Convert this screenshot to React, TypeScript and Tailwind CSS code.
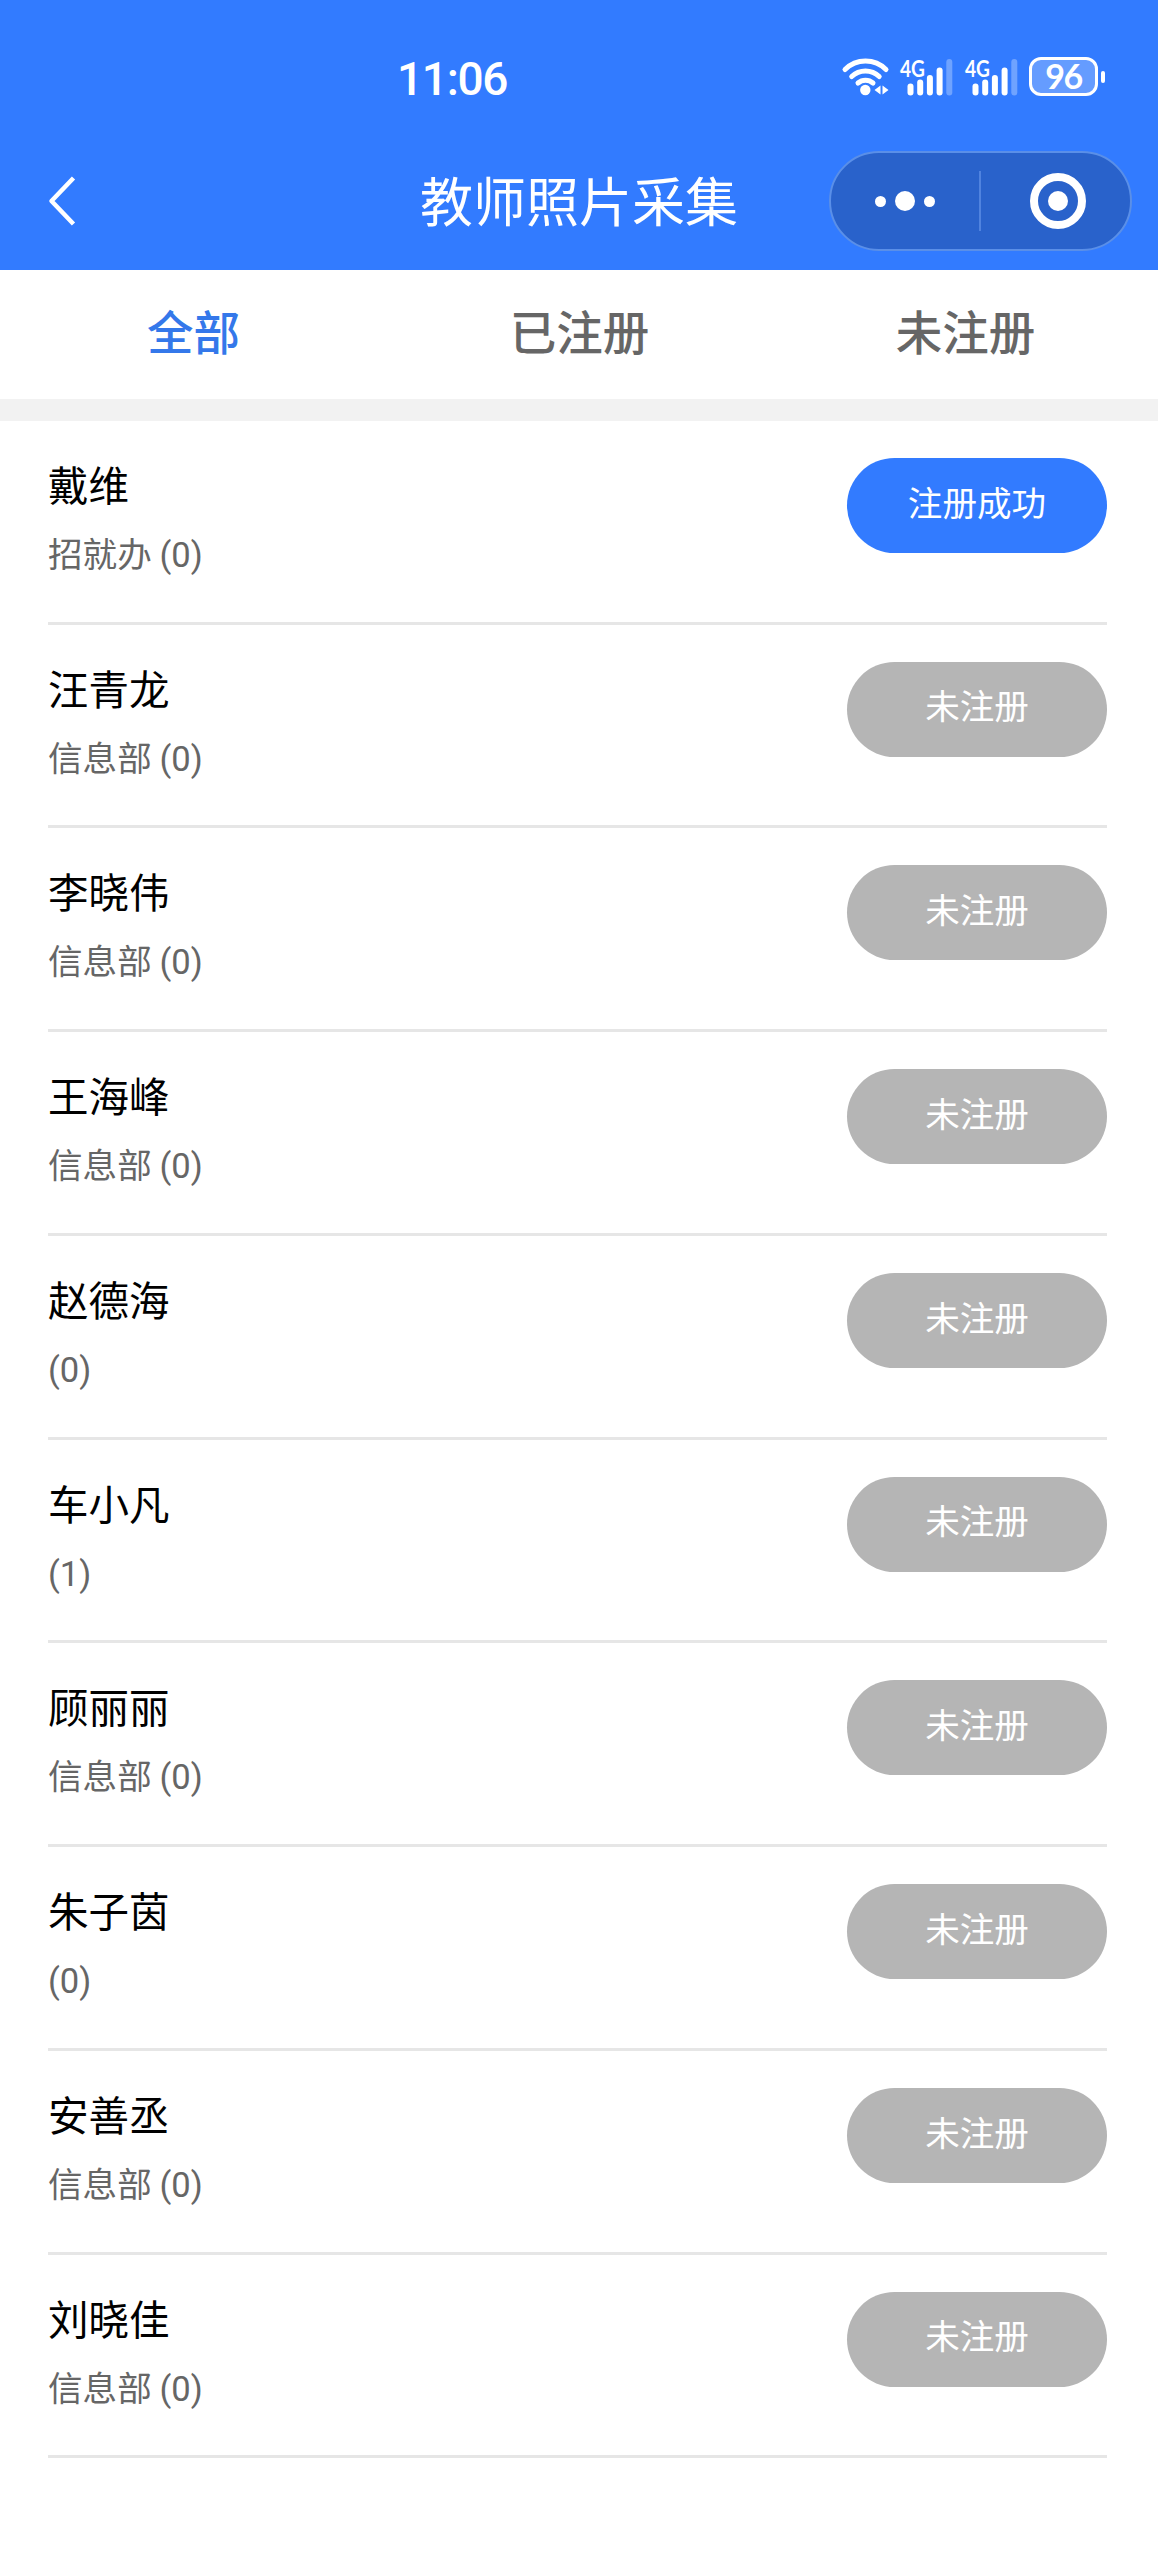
import React, { useState } from 'react';

const TEACHERS = [
  { name: '戴维', dept: '招就办', count: 0, registered: true },
  { name: '汪青龙', dept: '信息部', count: 0, registered: false },
  { name: '李晓伟', dept: '信息部', count: 0, registered: false },
  { name: '王海峰', dept: '信息部', count: 0, registered: false },
  { name: '赵德海', dept: '', count: 0, registered: false },
  { name: '车小凡', dept: '', count: 1, registered: false },
  { name: '顾丽丽', dept: '信息部', count: 0, registered: false },
  { name: '朱子茵', dept: '', count: 0, registered: false },
  { name: '安善丞', dept: '信息部', count: 0, registered: false },
  { name: '刘晓佳', dept: '信息部', count: 0, registered: false },
];

const TABS = ['全部', '已注册', '未注册'];

export default function App() {
  const [activeTab, setActiveTab] = useState('全部');

  const teachers = TEACHERS.filter(t => activeTab === '全部' || t.registered === (activeTab === '已注册'));

  return (
    <div className="min-h-[2560px] w-full bg-white font-['Noto_Sans_CJK_SC',sans-serif]">
      <header className="h-[270px] bg-[#327bff] text-white">
        <StatusBar />
        <NavBar />
      </header>

      <div className="flex h-[129px]">
        {TABS.map(tab => (
          <button
            key={tab}
            onClick={() => setActiveTab(tab)}
            className={`flex-1 pb-[8px] pl-[1px] text-[46.5px] leading-none font-medium ${activeTab === tab ? 'text-[#3478ea]' : 'text-[#666666]'}`}
          >
            {tab}
          </button>
        ))}
      </div>
      <div className="h-[22px] bg-[#f2f2f2]" />

      <main className="pr-[51px] pl-[48px]">
        {teachers.map(t => <TeacherRow key={t.name} teacher={t} />)}
      </main>
    </div>
  );
}

function StatusBar() {
  return (
    <div className="flex h-[151px] items-start justify-between pr-[53px] pl-[397px]">
      <span className="pt-[52px] font-['Roboto',sans-serif] text-[46px] leading-[54px] font-medium tracking-[-1.3px]">11:06</span>
      <div className="flex items-center pt-[49px]">
        <WifiIcon />
        <SignalIcon />
        <SignalIcon />
        <div className="ml-[3px] flex items-center gap-[3px]">
          <div className="flex h-[39px] w-[69px] items-center justify-center rounded-[12px] border-[3px] border-white bg-white/25 pb-[2px] font-['Lato',sans-serif] text-[34px] leading-none font-bold tracking-[-1.5px]">
            96
          </div>
          <div className="h-[12px] w-[4px] rounded-full bg-white" />
        </div>
      </div>
    </div>
  );
}

function WifiIcon() {
  return (
    <svg width="56" height="39" viewBox="0 0 56 39" fill="none" stroke="#fff" strokeWidth="5" strokeLinecap="round">
      <path d="M4 12.500a29 29 0 0 1 41 0" />
      <path d="M10.700 19.500a20 20 0 0 1 27.500 0" />
      <path d="M17 26a11.500 11.500 0 0 1 15 0" />
      <circle cx="24.300" cy="33" r="5.200" fill="#fff" stroke="none" />
      <path d="M39.500 28.500v9l-6-4.500zM41.500 28.500v9l6-4.500z" fill="#fff" stroke="none" />
    </svg>
  );
}

function SignalIcon() {
  return (
    <svg width="64.500" height="55" viewBox="-2 -8 64.500 55" fill="#fff">
      <text x="1" y="19.500" fontFamily="Lato, sans-serif" fontSize="23" fontWeight="700" textLength="25" lengthAdjust="spacingAndGlyphs">4G</text>
      <rect x="8.500" y="26.500" width="6" height="12" rx="3" />
      <rect x="18.200" y="22.500" width="6" height="16" rx="3" />
      <rect x="27.900" y="18" width="6" height="20.500" rx="3" />
      <rect x="37.600" y="10.500" width="6" height="28" rx="3" />
      <rect x="47.300" y="2" width="6" height="36.500" rx="3" opacity="0.300" />
    </svg>
  );
}

function NavBar() {
  return (
    <div className="grid h-[100px] grid-cols-[1fr_auto_1fr] items-center px-[26px]">
      <button aria-label="返回" className="ml-[22px] w-[28px]">
        <svg width="28" height="50" viewBox="0 0 28 50" fill="none" stroke="#fff" strokeWidth="4.500">
          <path d="M25.500 2L3.500 25l22 23" strokeLinejoin="round" />
        </svg>
      </button>
      <h1 className="pb-[3px] text-[53px] leading-none">教师照片采集</h1>
      <div className="flex h-[100px] w-[303px] items-center justify-self-end rounded-full border-2 border-[#5a8fe8] bg-[#2962cb]">
        <div className="flex w-[147px] items-center justify-center gap-[9px]">
          <i className="size-[11px] rounded-full bg-white" />
          <i className="size-[20px] rounded-full bg-white" />
          <i className="size-[11px] rounded-full bg-white" />
        </div>
        <div className="ml-[1px] h-[60px] w-[2px] bg-[#5083df]" />
        <div className="flex flex-1 justify-center pl-[4px]">
          <div className="flex size-[56px] items-center justify-center rounded-full border-8 border-white">
            <i className="size-[20px] rounded-full bg-white" />
          </div>
        </div>
      </div>
    </div>
  );
}

function TeacherRow({ teacher }: { teacher: (typeof TEACHERS)[number] }) {
  return (
    <div className="flex h-[203.740px] items-start justify-between border-b-[3px] border-[#e6e6e6] pt-[37px]">
      <div className="-mt-[2px]">
        <div className="text-[40.500px] leading-[56px] text-black">{teacher.name}</div>
        <div className="mt-[12px] text-[34.600px] leading-[56px] text-[#666666]">
          {teacher.dept} <span className="font-['Roboto',sans-serif]">({teacher.count})</span>
        </div>
      </div>
      <button
        className={`h-[95px] w-[260px] rounded-full pb-[9px] text-[34.600px] leading-none text-white ${teacher.registered ? 'bg-[#327bff]' : 'bg-[#b5b5b5]'}`}
      >
        {teacher.registered ? '注册成功' : '未注册'}
      </button>
    </div>
  );
}
